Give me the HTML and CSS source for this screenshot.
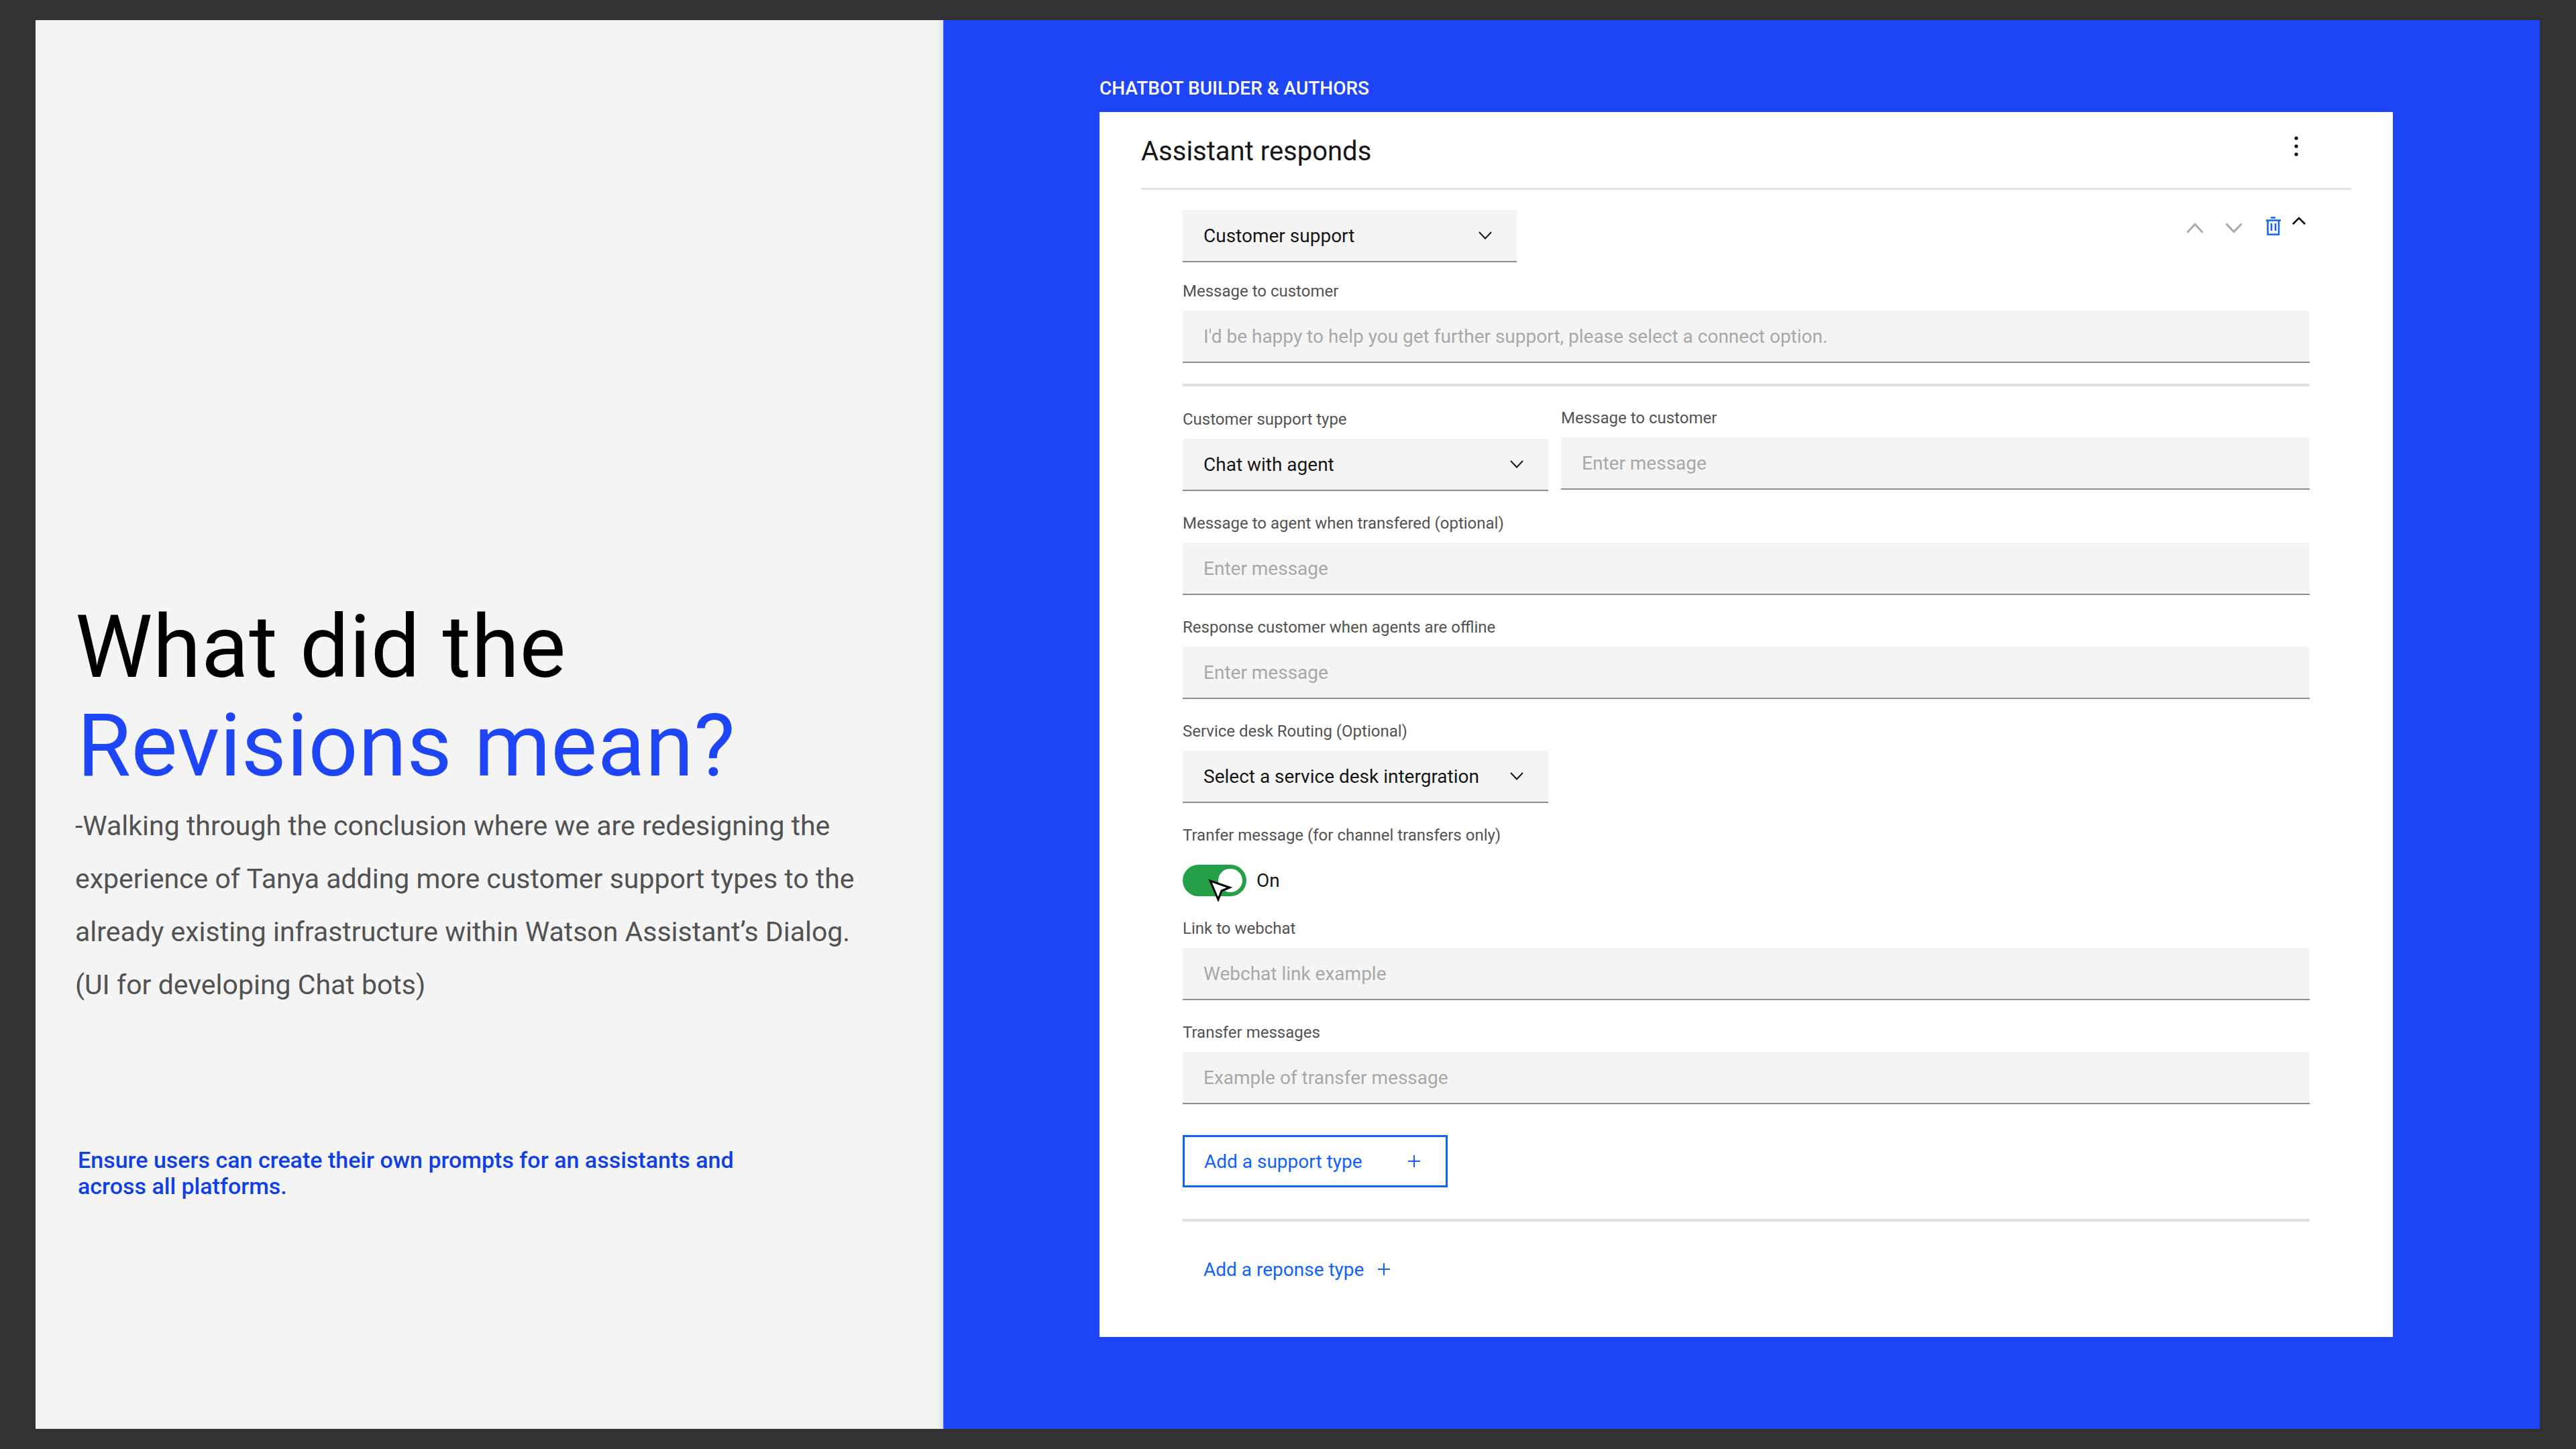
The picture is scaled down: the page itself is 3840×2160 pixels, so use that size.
FILE: index.html
```html
<!DOCTYPE html>
<html lang="en">
<head>
    <meta charset="UTF-8">
    <meta name="viewport" content="width=device-width, initial-scale=1.0">
    <title>What did the Revisions mean?</title>
    <link rel="stylesheet" href="styles.css">
</head>
<body>
    <div class="slide">
        <div class="left-panel">
            <h1 class="headline">What did the<br><span class="headline-blue">Revisions mean?</span></h1>
            <p class="intro">-Walking through the conclusion where we are redesigning the<br>experience of Tanya adding more customer support types to the<br>already existing infrastructure within Watson Assistant’s Dialog.<br>(UI for developing Chat bots)</p>
            <p class="callout">Ensure users can create their own prompts for an assistants and<br>across all platforms.</p>
        </div>

        <div class="right-panel">
            <div class="panel-title">CHATBOT BUILDER &amp; AUTHORS</div>
            <div class="card">
                <div class="card-header">
                    <h2 class="card-title">Assistant responds</h2>
                    <svg class="more-icon" width="6" height="30" viewBox="0 0 6 30"><circle cx="3" cy="3" r="2.6"/><circle cx="3" cy="15" r="2.6"/><circle cx="3" cy="27" r="2.6"/></svg>
                </div>

                <div class="card-body">
                    <div class="top-row">
                        <div class="select select-short">
                            <span>Customer support</span>
                            <svg class="chevron" width="20" height="12" viewBox="0 0 20 12"><path d="M1 1l9 9.5L19 1"/></svg>
                        </div>
                        <div class="actions">
                            <svg class="action action-up" width="26" height="16" viewBox="0 0 26 16"><path d="M1.5 14.5L13 2.5l11.500 12"/></svg>
                            <svg class="action action-down" width="26" height="16" viewBox="0 0 26 16"><path d="M1.500 1.500L13 13.500l11.500-12"/></svg>
                            <svg class="trash" width="24" height="28" viewBox="0 0 24 28"><path d="M8 1.500h7M1 5.500h22M3.500 6v20.500h16.500V6M9 10v11M15 10v11"/></svg>
                            <svg class="collapse" width="20" height="12" viewBox="0 0 20 12"><path d="M1 11l9-9 9 9"/></svg>
                        </div>
                    </div>

                    <div class="field">
                        <label class="field-label">Message to customer</label>
                        <div class="input">I'd be happy to help you get further support, please select a connect option.</div>
                    </div>

                    <div class="rule rule-top"></div>

                    <div class="field-row">
                        <div class="field-left">
                            <label class="field-label">Customer support type</label>
                            <div class="select">
                                <span>Chat with agent</span>
                                <svg class="chevron" width="20" height="12" viewBox="0 0 20 12"><path d="M1 1l9 9.500L19 1"/></svg>
                            </div>
                        </div>
                        <div class="field-right">
                            <label class="field-label">Message to customer</label>
                            <div class="input">Enter message</div>
                        </div>
                    </div>

                    <div class="field">
                        <label class="field-label">Message to agent when transfered (optional)</label>
                        <div class="input">Enter message</div>
                    </div>

                    <div class="field">
                        <label class="field-label">Response customer when agents are offline</label>
                        <div class="input">Enter message</div>
                    </div>

                    <div class="field">
                        <label class="field-label">Service desk Routing (Optional)</label>
                        <div class="select select-wide">
                            <span>Select a service desk intergration</span>
                            <svg class="chevron" width="20" height="12" viewBox="0 0 20 12"><path d="M1 1l9 9.500L19 1"/></svg>
                        </div>
                    </div>

                    <div class="field field-toggle">
                        <label class="field-label">Tranfer message (for channel transfers only)</label>
                        <div class="toggle-row">
                            <div class="toggle">
                                <span class="toggle-knob"></span>
                                <svg class="pointer" width="36" height="34" viewBox="0 0 36 34"><path d="M3 3l29 10-12 5-5 13z"/></svg>
                            </div>
                            <span class="toggle-text">On</span>
                        </div>
                    </div>

                    <div class="field">
                        <label class="field-label">Link to webchat</label>
                        <div class="input">Webchat link example</div>
                    </div>

                    <div class="field">
                        <label class="field-label">Transfer messages</label>
                        <div class="input">Example of transfer message</div>
                    </div>

                    <button class="add-button">
                        <span>Add a support type</span>
                        <svg class="plus" width="20" height="20" viewBox="0 0 20 20"><path d="M10 1v18M1 10h18"/></svg>
                    </button>

                    <div class="rule rule-bottom"></div>

                    <div class="add-link">
                        <span>Add a reponse type</span>
                        <svg class="plus" width="20" height="20" viewBox="0 0 20 20"><path d="M10 1v18M1 10h18"/></svg>
                    </div>
                </div>
            </div>
        </div>
    </div>
</body>
</html>
```

FILE: styles.css
```css
* {
    box-sizing: border-box;
}

body {
    margin: 0;
    width: 3840px;
    height: 2160px;
    padding: 30px 54px 30px 53px;
    background-color: #333333;
    font-family: Roboto, "Noto Sans", sans-serif;
    overflow: hidden;
}

.slide {
    display: flex;
    height: 2100px;
}

/* left side */
.left-panel {
    width: 1353px;
    padding: 861px 0 0 59px;
    background-color: #f4f4f4;
    box-shadow: inset -10px -4px 10px -8px rgba(0, 0, 0, 0.12);
}

.headline {
    margin: 0;
    font-size: 130px;
    font-weight: 400;
    line-height: 147px;
    letter-spacing: 0.5px;
    color: #000000;
}

.headline-blue {
    margin-left: 3px;
    color: #1e45f8;
}

.intro {
    margin: 7px 0 0;
    font-size: 41px;
    line-height: 79px;
    color: #525252;
}

.callout {
    margin: 202px 0 0 4px;
    font-size: 34px;
    font-weight: 500;
    line-height: 39px;
    color: #0f3fe6;
}

/* right side */
.right-panel {
    flex: 1;
    padding: 82px 0 0 232px;
    background-color: #1e45f8;
    border-left: 1px solid #4a6afa;
}

.panel-title {
    height: 40px;
    margin-bottom: 15px;
    font-size: 28px;
    font-weight: 500;
    line-height: 40px;
    color: #ffffff;
}

.card {
    width: 1928px;
    height: 1826px;
    padding: 0 62px;
    background-color: #ffffff;
}

.card-header {
    display: flex;
    justify-content: space-between;
    height: 116px;
    border-bottom: 3px solid #e0e0e0;
}

.card-title {
    margin: 39px 0 0;
    font-size: 40px;
    font-weight: 400;
    line-height: 40px;
    color: #161616;
}

.more-icon {
    margin: 36px 79px 0 0;
    fill: #000000;
}

.card-body {
    padding: 30px 62px 0;
}

.top-row {
    display: flex;
    justify-content: space-between;
}

.select,
.input {
    display: flex;
    align-items: center;
    height: 78px;
    padding: 0 31px;
    background-color: #f4f4f4;
    border-bottom: 2px solid #8d8d8d;
    font-size: 28px;
}

.select {
    justify-content: space-between;
    padding-right: 37px;
    color: #161616;
}

.select-short {
    width: 498px;
}

.select-wide {
    width: 545px;
}

.input {
    color: #a8a8a8;
}

.chevron {
    fill: none;
    stroke: #161616;
    stroke-width: 2;
}

.actions {
    display: flex;
    align-items: flex-start;
    padding: 10px 6px 0 0;
}

.action {
    margin-top: 9px;
    fill: none;
    stroke: #a8a8a8;
    stroke-width: 3;
}

.action-down {
    margin-left: 32px;
}

.trash {
    margin-left: 34px;
    fill: none;
    stroke: #0f62fe;
    stroke-width: 2.5;
}

.collapse {
    margin-left: 16px;
    fill: none;
    stroke: #000000;
    stroke-width: 2.5;
}

.field {
    margin-top: 27px;
}

.field-label {
    display: block;
    height: 32px;
    margin-bottom: 13px;
    font-size: 24px;
    line-height: 32px;
    color: #525252;
}

.rule {
    height: 4px;
    background-color: #e0e0e0;
}

.rule-top {
    margin-top: 31px;
}

.rule-bottom {
    margin-top: 47px;
}

.field-row {
    display: grid;
    grid-template-columns: 545px 1fr;
    column-gap: 19px;
    margin-top: 33px;
}

.field-right {
    margin-top: -2px;
}

.field-row + .field {
    margin-top: 32px;
}

.field + .field {
    margin-top: 32px;
}

.field-toggle .field-label {
    margin-bottom: 28px;
}

.toggle-row {
    display: flex;
    align-items: center;
    gap: 15px;
    height: 47px;
}

.toggle {
    position: relative;
    width: 95px;
    height: 47px;
    border-radius: 24px;
    background-color: #24a148;
}

.toggle-knob {
    position: absolute;
    top: 6px;
    right: 6px;
    width: 36px;
    height: 35px;
    border-radius: 50%;
    background-color: #ffffff;
}

.pointer {
    position: absolute;
    top: 21px;
    left: 38px;
    fill: #ffffff;
    stroke: #000000;
    stroke-width: 3;
}

.toggle-text {
    font-size: 28px;
    color: #161616;
}

.add-button {
    display: flex;
    align-items: center;
    justify-content: space-between;
    width: 395px;
    height: 78px;
    margin-top: 46px;
    padding: 0 37px 0 29px;
    background-color: #ffffff;
    border: 3px solid #0f62fe;
    font-family: inherit;
    font-size: 28px;
    color: #0f62fe;
}

.add-link {
    display: flex;
    align-items: center;
    gap: 20px;
    height: 40px;
    margin-top: 51px;
    padding-left: 31px;
    font-size: 28px;
    color: #0f62fe;
}

.plus {
    fill: none;
    stroke: #0f62fe;
    stroke-width: 2;
}
```
